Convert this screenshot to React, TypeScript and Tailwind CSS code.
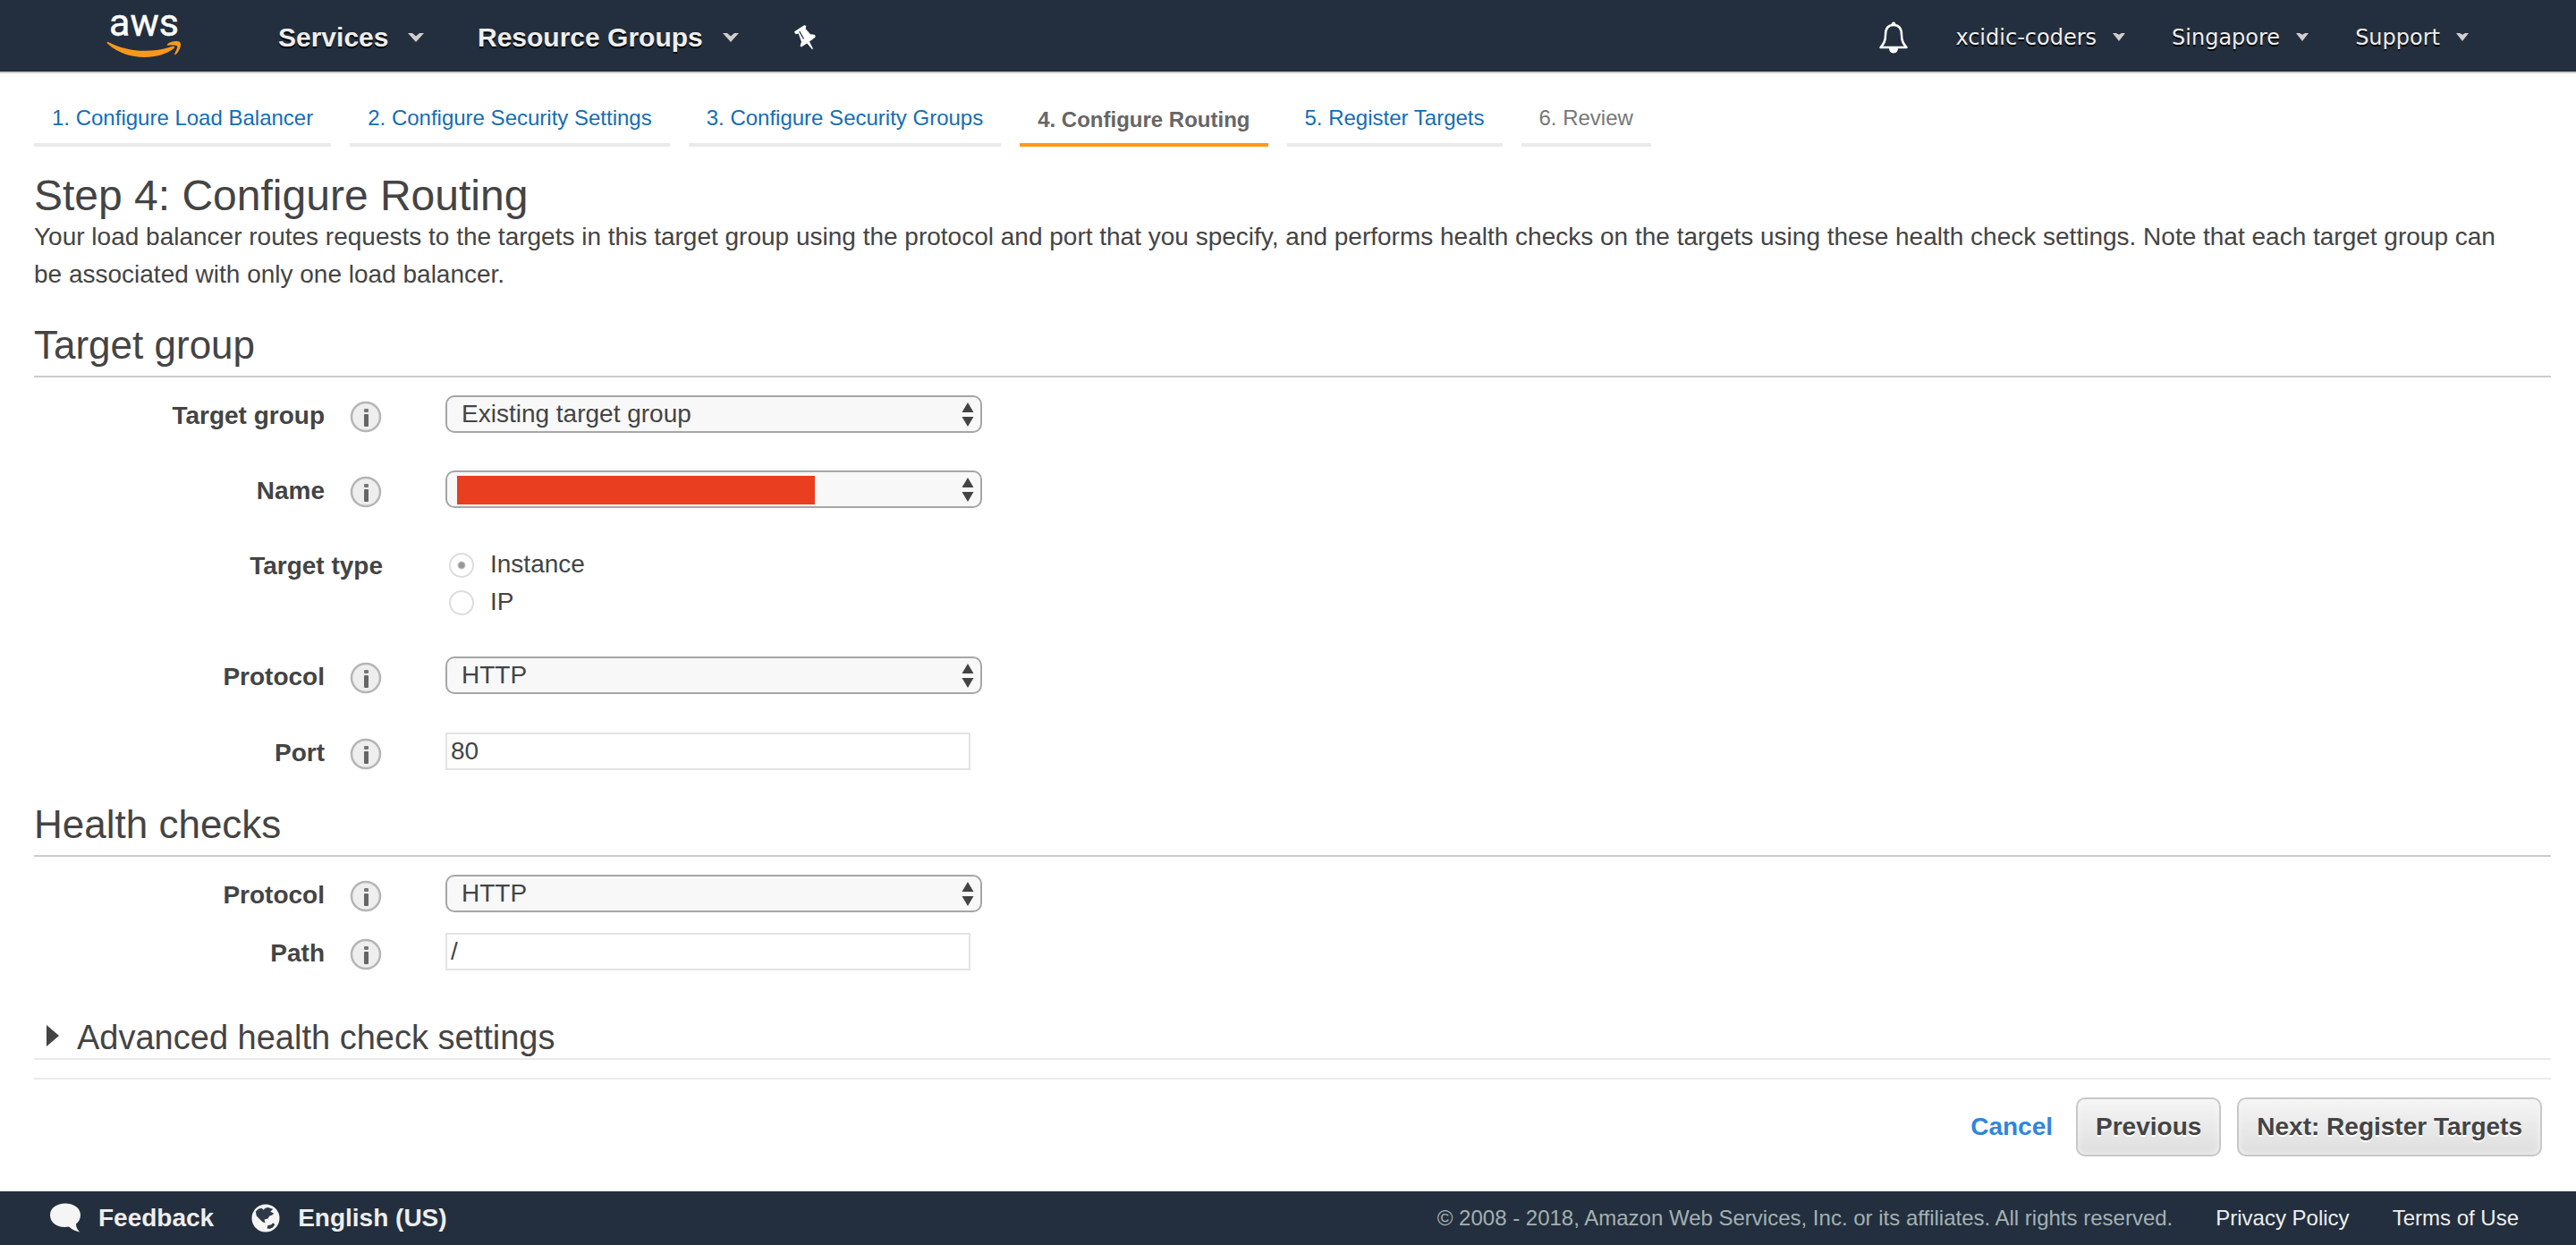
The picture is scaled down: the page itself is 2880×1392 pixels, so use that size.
import React from "react";

const sans = "font-['Liberation_Sans',Arial,sans-serif]";

function AwsLogo() {
  return (
    <a href="#home" aria-label="AWS" className="ml-[118px] w-[86px] self-start">
      <svg viewBox="0 0 86 68" className="h-[68px] w-[86px]" aria-hidden="true">
        <text x="43" y="40" textAnchor="middle" fontFamily="Roboto, sans-serif" fontWeight="400" fontSize="43" fill="#fff" stroke="#fff" strokeWidth="0.500">aws</text>
        <path d="M3 47 C24 58 50 60 74 52 C77 51 78.500 52.500 76 54.500 C60 67 24 69 2.500 49 C1 47.500 1.500 46.500 3 47 Z" fill="#f7981d" />
        <path d="M69 49.500 C72 46 80 45 83 47 C86 50 82 58 78.500 61 C77 61.500 77 60.500 77.500 59.500 C79 56 81 52.500 80 51.500 C78.500 50 72 50.500 69.500 50.700 C68.500 50.700 68.500 50 69 49.500 Z" fill="#f7981d" />
      </svg>
    </a>
  );
}

function Caret({ small = false }: { small?: boolean }) {
  return (
    <svg viewBox="0 0 18 10" preserveAspectRatio="none" className={small ? "h-[9px] w-[14px]" : "h-[10px] w-[18px]"} aria-hidden="true">
      <path d={small ? "M0 0 H5 L9 2 L13 0 H18 L9 10 Z" : "M0 0 H5 L9 3.500 L13 0 H18 L9 10 Z"} fill="#d0cecb" />
    </svg>
  );
}

function Info({ label }: { label: string }) {
  return (
    <button type="button" aria-label={`About ${label}`} className="mt-1 mr-px h-9 w-9 shrink-0">
      <svg viewBox="0 0 36 36" className="h-9 w-9" aria-hidden="true">
        <circle cx="18" cy="18" r="16" fill="#eee" stroke="#b5b5b5" strokeWidth="2.500" />
        <rect x="16" y="9" width="5" height="4" rx="1" fill="#777" />
        <rect x="16" y="15" width="5" height="14" rx="1" fill="#666" />
      </svg>
    </button>
  );
}

function Label({ text, id }: { text: string; id: string }) {
  return (
    <div className="flex w-[390px] shrink-0 justify-end gap-7 pt-[2px]">
      <label htmlFor={id} className="text-[28px] leading-[42px] font-bold">{text}</label>
      <Info label={text} />
    </div>
  );
}

function Select({ id, value, redacted = false }: { id: string; value: string; redacted?: boolean }) {
  return (
    <div className="relative w-[600px]">
      <select id={id} defaultValue={value} className="block h-[42px] w-full appearance-none rounded-[10px] border-2 border-[#a6a6a6] bg-[#f8f8f8] pl-4 text-[28px] leading-[36px] text-[#444]">
        <option value={value}>{value}</option>
      </select>
      {redacted && <span className="absolute top-[6px] left-[13px] h-8 w-[400px] bg-[#e93e20]" />}
      <svg viewBox="0 0 14 28" className="pointer-events-none absolute top-2 right-[9px] h-7 w-[14px]" aria-hidden="true">
        <path d="M7 0 L13.500 11 H0.500 Z M7 27 L13.500 16 H0.500 Z" fill="#444" />
      </svg>
    </div>
  );
}

function TextBox({ id, value }: { id: string; value: string }) {
  return (
    <input id={id} type="text" defaultValue={value} className="h-[42px] w-[587px] border-2 border-[#e3e3e3] bg-white px-1 text-[28px] leading-[38px] text-[#444]" />
  );
}

function Row({ children, className }: { children: React.ReactNode; className: string }) {
  return <div className={`flex items-start gap-[70px] ${className}`}>{children}</div>;
}

const tabs = [
  { label: "1. Configure Load Balancer", state: "link" },
  { label: "2. Configure Security Settings", state: "link" },
  { label: "3. Configure Security Groups", state: "link" },
  { label: "4. Configure Routing", state: "active" },
  { label: "5. Register Targets", state: "link" },
  { label: "6. Review", state: "disabled" },
];

const tabStyle: Record<string, string> = {
  link: "border-[#eaeaea] text-[#146eb4]",
  active: "border-[#ff9912] font-bold text-[#666] pt-[2px]",
  disabled: "border-[#eaeaea] text-[#777]",
};

const shadow = "[text-shadow:0_2px_0_#000]";
const navButton = "flex items-center text-[30px] font-bold text-[#eee]";
const actionButton =
  "h-[66px] rounded-[10px] border-2 border-[#c8c8c8] bg-linear-to-b from-[#f5f5f5] to-[#dedede] px-5 text-[28px] font-bold text-[#444] shadow-[inset_0_0_6px_#f5f5f5] [text-shadow:0_2px_0_#fff]";

function Header() {
  return (
    <header className="flex h-[82px] items-center border-b-2 border-[#ccc] bg-[#232f3e]">
      <AwsLogo />
      <nav aria-label="Main" className="ml-[107px] flex items-center pt-[3px]">
        <button type="button" className={`${navButton} w-[223px] gap-[22px]`}>
          <span className={shadow}>Services</span>
          <Caret />
        </button>
        <button type="button" className={`${navButton} gap-[22px]`}>
          <span className={shadow}>Resource Groups</span>
          <Caret />
        </button>
        <button type="button" aria-label="Pinned shortcuts" className="ml-[62px]">
          <svg viewBox="0 0 28 28" className="h-7 w-7" aria-hidden="true">
            <path d="M11 0.300 Q12.500 0 13.300 1.500 L12.700 4.200 L18 10.200 L22.700 10.800 Q24.500 12.500 23.200 14 L17 18.500 L20.900 26.200 L20 27.200 L14.200 20.400 L8 24.500 Q6.500 24.300 6.700 22.800 L8 18.800 L4.700 9.500 L2 10.200 Q0 9.500 0.200 7.300 Z" fill="#fff" />
            <path d="M6 7.500 L10.300 15" stroke="#232f3e" strokeWidth="1.300" strokeLinecap="round" />
          </svg>
        </button>
      </nav>
      <nav aria-label="Account" className="mr-[120px] ml-auto flex items-center gap-[52px] pt-[3px] font-['DejaVu_Sans',Verdana,sans-serif] text-2xl text-[#eee]">
        <button type="button" aria-label="Notifications">
          <svg viewBox="0 0 34 36" className="h-9 w-[34px]" aria-hidden="true">
            <path d="M17 4 C10 4 8 9 8 15 C8 22 6 25 2.500 29 H31.500 C28 25 26 22 26 15 C26 9 24 4 17 4 Z" fill="none" stroke="#fff" strokeWidth="2.500" strokeLinejoin="round" />
            <path d="M14.500 4 Q14.500 0.500 17 0.500 Q19.500 0.500 19.500 4 Z M12 30 H22 Q22 35 17 35.500 Q12 35 12 30 Z" fill="#fff" />
          </svg>
        </button>
        {["xcidic-coders", "Singapore", "Support"].map((item) => (
          <button key={item} type="button" className="flex items-center gap-[18px]">
            <span className={shadow}>{item}</span>
            <Caret small />
          </button>
        ))}
      </nav>
    </header>
  );
}

function Footer() {
  return (
    <footer className="flex h-[60px] items-center bg-[#232f3e] pr-16 pl-14">
      <a href="#feedback" className="flex items-center gap-5 text-[28px] font-bold text-[#eee]">
        <svg viewBox="0 0 34 34" className="h-[34px] w-[34px]" aria-hidden="true">
          <path d="M17 0.500 C27 0.500 34 6 34 13.500 C34 18 32 21 29 23.500 C29 27 30.500 29.500 33 32.500 C28 31.500 24 29.500 21 26.500 C9 28.500 0 22.500 0 13.500 C0 6 7 0.500 17 0.500 Z" fill="#f5f5f5" />
        </svg>
        Feedback
      </a>
      <button type="button" className="ml-[42px] flex items-center gap-5 text-[28px] font-bold text-[#eee]">
        <svg viewBox="0 0 33 33" className="h-8 w-8" aria-hidden="true">
          <circle cx="16.500" cy="16.500" r="16" fill="#f5f5f5" />
          <path d="M5 9 L8 6 L12 5 L14 7 L16 5 L19 4 L25 6 L22 9 L26 11 L24 13 L21 14 L19 17 L15 18 L16 22 L13 21 L10 18 L6 14 Z M19 25 L23 24 L25 22 L27 24 L25 27 L21 29 L18 28 Z" fill="#2f3a48" />
        </svg>
        English (US)
      </button>
      <p className="ml-auto text-2xl text-[#a4b1b3]">© 2008 - 2018, Amazon Web Services, Inc. or its affiliates. All rights reserved.</p>
      <a href="#privacy" className="ml-12 text-2xl text-[#eee]">Privacy Policy</a>
      <a href="#terms" className="ml-12 text-2xl text-[#eee]">Terms of Use</a>
    </footer>
  );
}

function SectionTitle({ children }: { children: React.ReactNode }) {
  return <h2 className="border-b-2 border-[#ccc] pb-[2px] text-[44px] leading-[64px]">{children}</h2>;
}

export default function App() {
  return (
    <div className={`flex min-h-screen flex-col bg-white text-[#444] ${sans}`}>
      <Header />
      <main className="flex grow flex-col pr-7 pl-[38px]">
        <nav aria-label="Wizard steps" className="flex gap-[21px] pt-7">
          {tabs.map((tab) => (
            <a key={tab.label} href="#step" aria-current={tab.state === "active" ? "step" : undefined} className={`h-[54px] border-b-4 px-5 text-2xl leading-[44px] ${tabStyle[tab.state]}`}>
              {tab.label}
            </a>
          ))}
        </nav>
        <h1 className="mt-[30px] text-5xl leading-[50px]">Step 4: Configure Routing</h1>
        <p className="pr-8 text-[28px] leading-[42px]">
          Your load balancer routes requests to the targets in this target group using the protocol and port that you specify, and performs health checks on the targets using these health check settings. Note that each target group can be associated with only one load balancer.
        </p>

        <div className="mt-[26px]">
          <SectionTitle>Target group</SectionTitle>
          <Row className="mt-5 h-[84px]">
            <Label text="Target group" id="target-group" />
            <Select id="target-group" value="Existing target group" />
          </Row>
          <Row className="h-[84px]">
            <Label text="Name" id="name" />
            <Select id="name" value="" redacted />
          </Row>
          <fieldset className="flex h-[124px] items-start gap-[70px]">
            <legend className="float-left w-[390px] pt-[2px] text-right text-[28px] leading-[42px] font-bold">Target type</legend>
            <div className="flex flex-col text-[28px] leading-[42px]">
              {["Instance", "IP"].map((type) => (
                <label key={type} className="flex items-center gap-[18px] pl-1">
                  <input type="radio" name="target-type" defaultChecked={type === "Instance"} className="mt-[2px] h-7 w-7 appearance-none rounded-full border-2 border-[#ddd] bg-white checked:bg-[radial-gradient(circle,#999_3px,#fff_5px)]" />
                  {type}
                </label>
              ))}
            </div>
          </fieldset>
          <Row className="h-[85px]">
            <Label text="Protocol" id="protocol" />
            <Select id="protocol" value="HTTP" />
          </Row>
          <Row className="h-[71px]">
            <Label text="Port" id="port" />
            <TextBox id="port" value="80" />
          </Row>
        </div>

        <div>
          <SectionTitle>Health checks</SectionTitle>
          <Row className="mt-5 h-[65px]">
            <Label text="Protocol" id="health-protocol" />
            <Select id="health-protocol" value="HTTP" />
          </Row>
          <Row className="h-[94px]">
            <Label text="Path" id="path" />
            <TextBox id="path" value="/" />
          </Row>
        </div>

        <button type="button" aria-expanded="false" className="flex items-center gap-5 border-b-2 border-[#eaeaea] pl-[14px] text-left text-[38px] leading-[46px]">
          <svg viewBox="0 0 14 24" className="mb-1 h-6 w-[14px]" aria-hidden="true">
            <path d="M0 0 L14 12 L0 24 Z" fill="#444" />
          </svg>
          Advanced health check settings
        </button>
        <div className="mt-5 flex items-center justify-end border-t-2 border-[#eaeaea] pt-5 pr-[10px] pb-9">
          <a href="#cancel" className="mr-[26px] text-[28px] font-bold text-[#2e86de]">Cancel</a>
          <button type="button" className={`${actionButton} mr-[18px]`}>Previous</button>
          <button type="button" className={actionButton}>Next: Register Targets</button>
        </div>
      </main>
      <Footer />
    </div>
  );
}
